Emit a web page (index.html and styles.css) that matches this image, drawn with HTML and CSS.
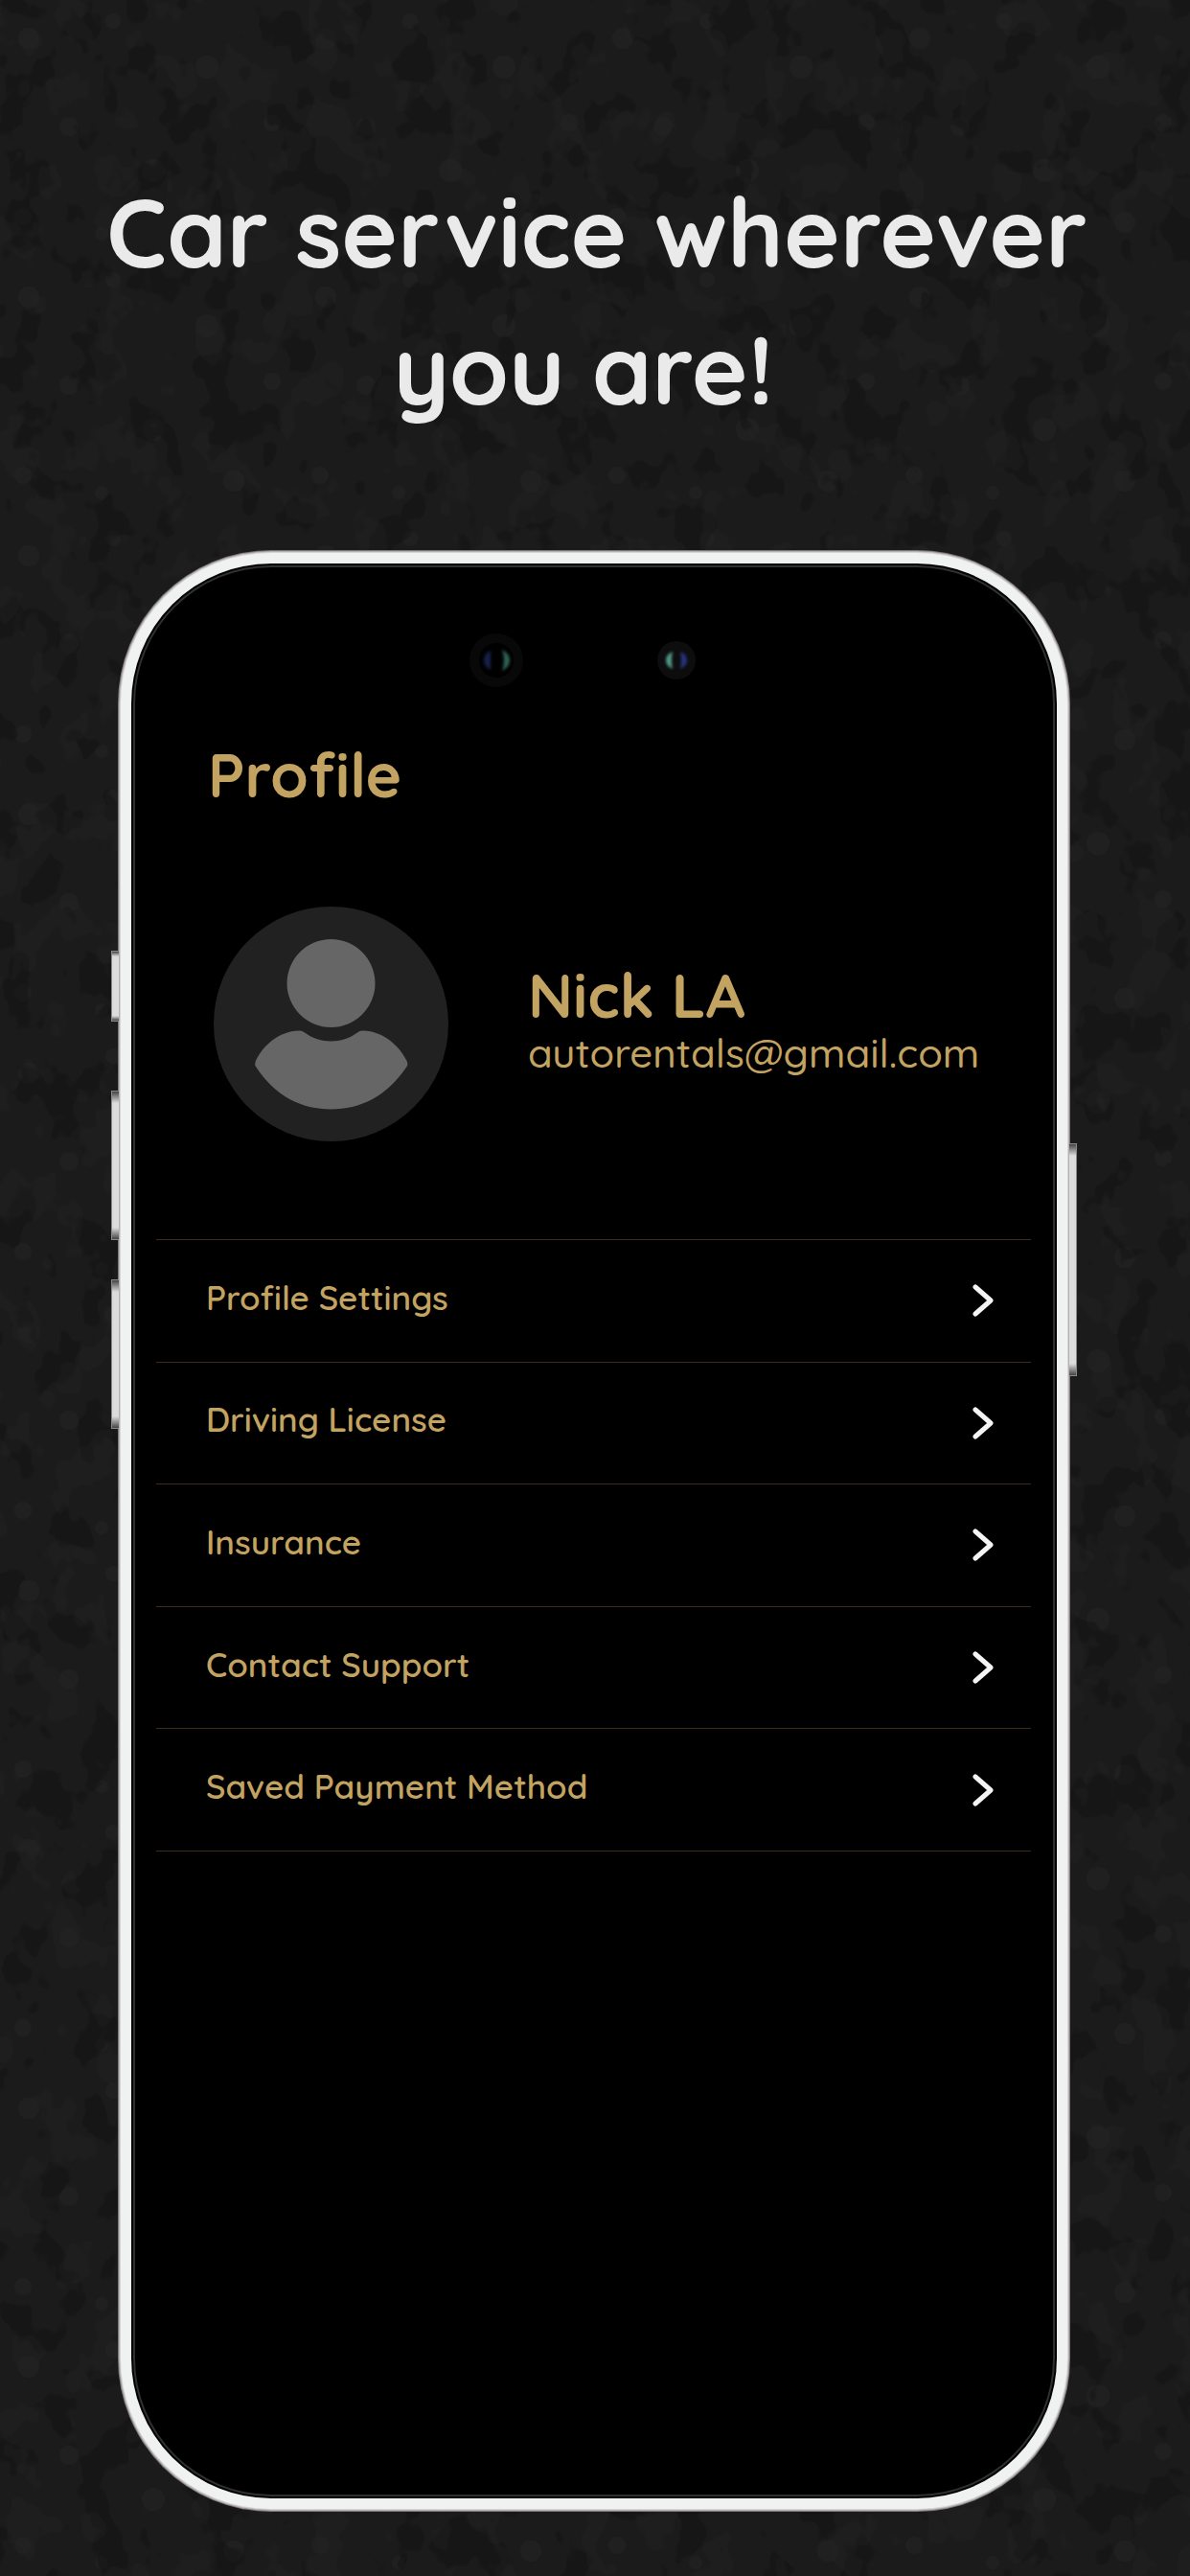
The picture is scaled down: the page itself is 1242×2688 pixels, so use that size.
FILE: index.html
```html
<!DOCTYPE html>
<html lang="en">
<head>
<meta charset="utf-8">
<meta name="viewport" content="width=device-width, initial-scale=1">
<title>Car service – Profile</title>
<link rel="stylesheet" href="styles.css">
</head>
<body>
<svg class="texture" aria-hidden="true">
  <defs>
    <filter id="dark-flecks" x="0" y="0" width="100%" height="100%" color-interpolation-filters="sRGB">
      <feTurbulence type="fractalNoise" baseFrequency="0.024 0.019" numOctaves="3" seed="7"/>
      <feColorMatrix values="0 0 0 0 0.06  0 0 0 0 0.06  0 0 0 0 0.06  20 0 0 0 -11.4"/>
    </filter>
    <filter id="light-flecks" x="0" y="0" width="100%" height="100%" color-interpolation-filters="sRGB">
      <feTurbulence type="fractalNoise" baseFrequency="0.022 0.018" numOctaves="3" seed="23"/>
      <feColorMatrix values="0 0 0 0 0.15  0 0 0 0 0.15  0 0 0 0 0.15  0 20 0 0 -11.6"/>
    </filter>
    <pattern id="spots" width="310" height="270" patternUnits="userSpaceOnUse">
      <g fill="#202020">
        <circle cx="30" cy="40" r="11"/><circle cx="118" cy="22" r="8"/><circle cx="216" cy="70" r="12"/>
        <circle cx="284" cy="128" r="9"/><circle cx="72" cy="132" r="10"/><circle cx="160" cy="178" r="12"/>
        <circle cx="24" cy="226" r="9"/><circle cx="244" cy="232" r="11"/><circle cx="106" cy="244" r="7"/>
      </g>
    </pattern>
  </defs>
  <rect width="100%" height="100%" fill="url(#spots)"/>
  <rect width="100%" height="100%" filter="url(#dark-flecks)" opacity="0.4"/>
  <rect width="100%" height="100%" filter="url(#light-flecks)" opacity="0.3"/>
</svg>

<main class="page">
  <h1 class="headline">Car service wherever<br>you are!&nbsp;</h1>

  <section class="phone" aria-label="Profile">
    <span class="side-key side-key-action"></span>
    <span class="side-key side-key-up"></span>
    <span class="side-key side-key-down"></span>
    <span class="side-key side-key-power"></span>

    <svg class="cameras" viewBox="0 0 236 56" aria-hidden="true">
      <defs>
        <filter id="soft" x="-50%" y="-50%" width="200%" height="200%" color-interpolation-filters="sRGB"><feGaussianBlur stdDeviation="1.4"/></filter>
      </defs>
      <circle cx="28" cy="28" r="23" fill="none" stroke="#080808" stroke-width="10"/>
      <g filter="url(#soft)">
        <path d="M22 18q-7 3-7 10t7 10z" fill="#16204a"/>
        <path d="M34 17q8 4 8 11t-8 11q4-11 0-22z" fill="#2f6155"/>
      </g>
      <circle cx="216" cy="28" r="20" fill="#0d0d0d"/>
      <g filter="url(#soft)">
        <path d="M212 19q-7 3-7 9t7 9q-2-9 0-18z" fill="#4f9a88"/>
        <path d="M220 19q7 3 7 9t-7 9q2-9 0-18z" fill="#26347c"/>
      </g>
    </svg>

    <h2 class="title">Profile</h2>

    <div class="user">
      <svg class="avatar" viewBox="0 0 245 245" role="img" aria-label="User avatar">
        <circle cx="122.5" cy="122.5" r="122.5" fill="#212121"/>
        <g fill="#666">
          <circle cx="122.5" cy="80" r="46"/>
          <path d="M89 129.500Q92 129 95 131.500C111 143.500 134 143.500 150 131.500Q153 129 156 129.500C177 130 194 145 202 162Q203 165 201.500 167C181 198 153 211.500 122.500 211.500S64 198 44 167Q42.500 165 43.500 162C51 145 68 130 89 129.500Z"/>
        </g>
      </svg>
      <div class="identity">
        <p class="name">Nick LA</p>
        <p class="email">autorentals@gmail.com</p>
      </div>
    </div>

    <nav aria-label="Profile menu">
      <ul class="menu">
        <li><a class="menu-link" href="#settings"><span class="menu-label">Profile Settings</span><svg class="chevron" viewBox="0 0 22 34" aria-hidden="true"><path d="M3 3l16 14L3 31"/></svg></a></li>
        <li><a class="menu-link" href="#license"><span class="menu-label">Driving License</span><svg class="chevron" viewBox="0 0 22 34" aria-hidden="true"><path d="M3 3l16 14L3 31"/></svg></a></li>
        <li><a class="menu-link" href="#insurance"><span class="menu-label">Insurance</span><svg class="chevron" viewBox="0 0 22 34" aria-hidden="true"><path d="M3 3l16 14L3 31"/></svg></a></li>
        <li><a class="menu-link" href="#support"><span class="menu-label">Contact Support</span><svg class="chevron" viewBox="0 0 22 34" aria-hidden="true"><path d="M3 3l16 14L3 31"/></svg></a></li>
        <li><a class="menu-link" href="#payment"><span class="menu-label">Saved Payment Method</span><svg class="chevron" viewBox="0 0 22 34" aria-hidden="true"><path d="M3 3l16 14L3 31"/></svg></a></li>
      </ul>
    </nav>
  </section>
</main>
</body>
</html>
```

FILE: styles.css
```css
* {
  box-sizing: border-box;
  margin: 0;
  padding: 0;
}

body {
  position: relative;
  background: #1b1b1b;
  color: #c3a361;
  font-family: Quicksand, "Open Sans", "Noto Sans", sans-serif;
}

/* Mottled wall behind everything */
.texture {
  position: absolute;
  inset: 0;
  width: 100%;
  height: 100%;
}

.page {
  position: relative;
  display: flex;
  flex-direction: column;
  gap: 121px;
  min-height: 100vh;
  padding: 170px 128px 70px 126px;
}

.headline {
  margin: 0 -68px 0 -62px;
  color: #eaeaea;
  font-size: 100px;
  font-weight: 700;
  line-height: 143px;
  text-align: center;
}

/* Phone body: white rim, grey outer bevel, thin inner ring */
.phone {
  position: relative;
  flex: 1;
  display: flex;
  flex-direction: column;
  padding: 73px 27px 73px 26px;
  background: #000;
  border: 11px solid #f0f2f1;
  border-radius: 157px;
  box-shadow:
    0 0 0 1px #d6d3d4,
    0 0 0 2px #b5b1b2,
    0 0 0 3px #7d797a,
    inset 0 0 0 2px #000,
    inset 0 0 0 4px #303030;
}

.side-key {
  position: absolute;
  left: -21px;
  width: 8px;
  height: 156px;
  border: 1px solid #8a8a8a;
  border-right: 0;
  background: linear-gradient(#444, #dcdcdc 12px, #dcdcdc calc(100% - 12px), #444);
}

.side-key-action {
  top: 404px;
  height: 74px;
  background: linear-gradient(#444, #dcdcdc 5px, #dcdcdc calc(100% - 5px), #444);
}

.side-key-up {
  top: 550px;
}

.side-key-down {
  top: 747px;
}

.side-key-power {
  top: 605px;
  right: -21px;
  left: auto;
  height: 243px;
  border-right: 1px solid #8a8a8a;
  border-left: 0;
}

.cameras {
  align-self: center;
  width: 236px;
  height: 56px;
  margin-right: 24px;
}

.title {
  margin-top: 55px;
  padding-left: 54px;
  font-size: 64px;
  font-weight: 700;
  line-height: 72px;
}

.user {
  display: flex;
  align-items: center;
  gap: 83px;
  margin: 102px 0;
  padding-left: 60px;
}

.avatar {
  flex: none;
  width: 245px;
  height: 245px;
}

.identity {
  padding-bottom: 8px;
}

.name {
  font-size: 64px;
  font-weight: 700;
  line-height: 68px;
}

.email {
  font-size: 42px;
  font-weight: 500;
  line-height: 54px;
}

.menu {
  display: grid;
  grid-auto-rows: 1fr;
  min-height: 639px;
  list-style: none;
  border-bottom: 1px solid #3a2e1b;
}

.menu-link {
  display: flex;
  align-items: center;
  justify-content: space-between;
  height: 100%;
  padding: 0 39px 0 52px;
  border-top: 1px solid #3a2e1b;
  color: inherit;
  text-decoration: none;
}

.menu-label {
  padding-bottom: 7px;
  font-size: 35px;
  font-weight: 600;
  line-height: 48px;
}

.chevron {
  width: 22px;
  height: 34px;
  fill: none;
  stroke: #f4f4f4;
  stroke-width: 5;
  stroke-linecap: round;
  stroke-linejoin: round;
}
```
